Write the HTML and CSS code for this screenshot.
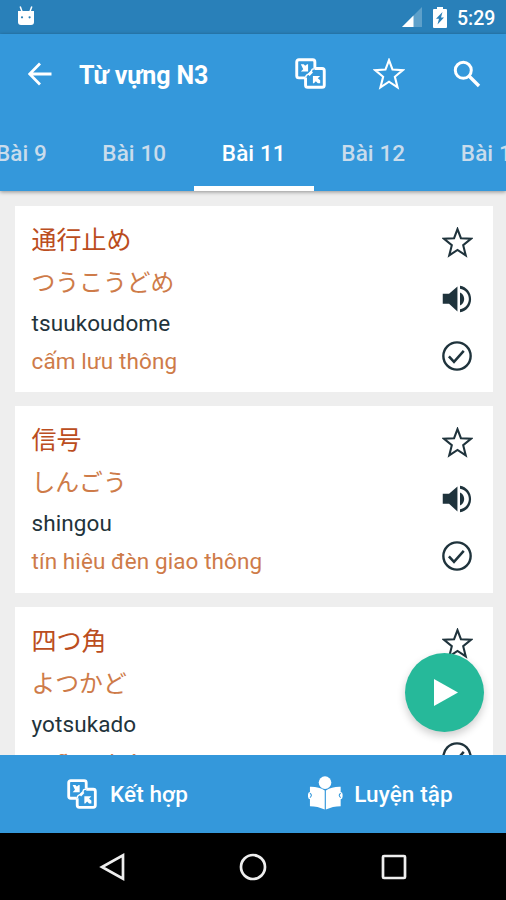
FILE: index.html
```html
<!DOCTYPE html>
<html lang="vi">
<head>
<meta charset="utf-8">
<title>Từ vựng N3</title>
<link rel="stylesheet" href="styles.css">
</head>
<body>
<svg class="defs" aria-hidden="true">
  <symbol id="star" viewBox="0 0 30 30"><path d="M15 2l3.300 8.800 9.700.6-7.500 6.200 2.500 9.900-8-5.300-8 5.300 2.500-9.900L2 11.400l9.700-.6z" fill="none" stroke="currentColor" stroke-width="2"/></symbol>
  <symbol id="sound" viewBox="0 0 24 24"><path d="M2.500 8.500v6.700h4.200l5.600 5.100V3.700L6.700 8.500zM14 7.700v8.700c1.700-.8 2.800-2.500 2.800-4.400S15.700 8.500 14 7.700zM14 3.200v2c3.500.7 5.900 3.400 5.900 6.800s-2.400 6.200-5.900 6.900v2c4.400-.7 7.400-4.400 7.400-8.900s-3-8.200-7.400-8.900z"/></symbol>
  <symbol id="check" viewBox="0 0 24 24"><circle cx="12" cy="12" r="9.100" fill="none" stroke="currentColor" stroke-width="1.600"/><path d="M6.600 12.200l3.400 3.700 6.500-7.300" fill="none" stroke="currentColor" stroke-width="1.700"/></symbol>
  <symbol id="match" viewBox="0 0 32 32"><g fill="none" stroke="currentColor" stroke-width="3"><path d="M10.500 20.500H4a2.200 2.200 0 0 1-2.200-2.200V4A2.200 2.200 0 0 1 4 1.800h14.300A2.200 2.200 0 0 1 20.500 4v6.500"/><path d="M20.500 10.900H28a2.200 2.200 0 0 1 2.200 2.200V28a2.200 2.200 0 0 1-2.200 2.200H13.100a2.200 2.200 0 0 1-2.200-2.200v-7.500"/><path d="M20.500 11c-5 0-2 2-4.500 4.500s-5 0-5 5" stroke-width="1.500"/><path d="M14 17.500l3.500-3.500" stroke-width="3"/></g><path d="M6 6.500h3l1.500 1.500L12.500 6.500h1v7.500H6l2.500-2.500zM18.500 18.500h7.500L23.500 21l2.500 2v3h-2.500L21.500 24l-2 2h-1z"/></symbol>
</svg>
<div class="screen">
  <header class="status">
    <svg class="robot" viewBox="0 0 18 20"><path d="M1 5h16v11q0 3-3 3H4q-3 0-3-3z"/><path d="M3.200.5l1.800 5M14.800.5l-1.800 5" stroke="currentColor" stroke-width="1.500"/><g fill="#2980b9"><circle cx="5" cy="11.300" r="1.100"/><circle cx="12.600" cy="11.300" r="1.100"/></g></svg>
    <span class="spring"></span>
    <svg class="signal" viewBox="0 0 20 20"><path opacity=".25" d="M0 20L20 0v20z"/><path d="M0 20L11.500 8.500V20z"/></svg>
    <svg class="battery" viewBox="0 0 14 21"><path d="M4 0h6v2h3q1 0 1 1v17q0 1-1 1H1q-1 0-1-1V3q0-1 1-1h3z"/><path fill="#2980b9" d="M9.500 5L3 11.800h3L4.500 17.500l6.500-7H8z"/></svg>
    <span class="clock">5:29</span>
  </header>
  <div class="appbar">
    <div class="toolbar">
      <svg class="back" viewBox="0 0 24 24"><path d="M12 1.500L1.600 12 12 22.500M2 12h21.500" fill="none" stroke="currentColor" stroke-width="2.800"/></svg>
      <h1>Từ vựng N3</h1>
      <svg class="tool-match"><use href="#match"/></svg>
      <svg class="tool-star"><use href="#star"/></svg>
      <svg class="search" viewBox="0 0 28 28"><circle cx="10.300" cy="10.300" r="8" fill="none" stroke="currentColor" stroke-width="3"/><path d="M16 16l10 10" stroke="currentColor" stroke-width="3.300"/></svg>
    </div>
    <nav class="tabs">
      <span class="tab short">Bài 9</span><span class="tab">Bài 10</span><span class="tab active">Bài 11</span><span class="tab">Bài 12</span><span class="tab">Bài 13</span>
    </nav>
  </div>
  <main class="list">
    <article class="card">
      <div class="words"><p class="kanji" lang="ja">通行止め</p><p class="kana" lang="ja">つうこうどめ</p><p class="romaji">tsuukoudome</p><p class="meaning">cấm lưu thông</p></div>
      <div class="actions"><svg class="fav"><use href="#star"/></svg><svg><use href="#sound"/></svg><svg><use href="#check"/></svg></div>
    </article>
    <article class="card">
      <div class="words"><p class="kanji" lang="ja">信号</p><p class="kana" lang="ja">しんごう</p><p class="romaji">shingou</p><p class="meaning">tín hiệu đèn giao thông</p></div>
      <div class="actions"><svg class="fav"><use href="#star"/></svg><svg><use href="#sound"/></svg><svg><use href="#check"/></svg></div>
    </article>
    <article class="card">
      <div class="words"><p class="kanji" lang="ja">四つ角</p><p class="kana" lang="ja">よつかど</p><p class="romaji">yotsukado</p><p class="meaning">ngã tư đường</p></div>
      <div class="actions"><svg class="fav"><use href="#star"/></svg><svg><use href="#sound"/></svg><svg><use href="#check"/></svg></div>
    </article>
    <div class="fab"><svg viewBox="0 0 24 28"><path d="M0 0l24 13.500L0 27z"/></svg></div>
  </main>
  <footer class="bottom">
    <div class="choice"><svg class="match-icon"><use href="#match"/></svg><span>Kết hợp</span></div>
    <div class="choice practice"><svg class="reader" viewBox="0 0 36 34"><circle cx="17.500" cy="6.300" r="6.500"/><path d="M2 10.500q9-.3 15.200 3.800V34Q10 30.500 2 30.500v-7Q0 23 0 20.500v-2q0-2 2-2.500zM33.600 10.500q-9-.3-15.200 3.800V34q7-3.500 15.200-3.500v-7q2-.5 2-3v-2q0-2-2-2.500z"/><path d="M2 17.200q3 2 0 4.500M33.600 17.200q-3 2 0 4.500" fill="none" stroke="#3498db" stroke-width="1.100"/></svg><span>Luyện tập</span></div>
  </footer>
  <nav class="system">
    <svg viewBox="0 0 28 28"><path d="M24 2.400v23.200L3 14z"/></svg>
    <svg viewBox="0 0 28 28"><circle cx="14" cy="14" r="12"/></svg>
    <svg viewBox="0 0 28 28"><rect x="3" y="3" width="22" height="22" rx="1"/></svg>
  </nav>
</div>
</body>
</html>
```
FILE: styles.css
```css
* { box-sizing: border-box; }
body { margin: 0; font-family: Roboto, "Noto Sans CJK JP", sans-serif; }
svg { display: block; fill: currentColor; flex: none; }
.defs { position: absolute; width: 0; height: 0; }
.screen { width: 506px; height: 900px; overflow: hidden; display: flex; flex-direction: column; background: #eee; }
.status { height: 34px; flex: none; background: #2980b9; color: #fff; display: flex; align-items: center; padding: 0 11px 0 17px; }
.robot { width: 18px; height: 20px; margin-top: -3px; }
.spring { flex: 1; }
.signal { width: 20px; height: 20px; margin-right: 11px; }
.battery { width: 14px; height: 21px; margin-right: 10px; }
.clock { font-size: 19.5px; font-weight: 500; line-height: 34px; width: 38px; white-space: nowrap; margin-top: 3px; }
.appbar { height: 157px; flex: none; background: #3498db; color: #fff; box-shadow: 0 1px 4px rgba(0,0,0,.4); z-index: 1; }
.toolbar { height: 79px; display: flex; align-items: center; padding: 0 25px 0 28px; }
.back { width: 24px; height: 24px; margin-right: 27px; }
h1 { margin: 0; flex: 1; font-size: 25px; font-weight: 700; letter-spacing: -.1px; line-height: 32px; padding-top: 4px; }
.tool-match { width: 31px; height: 31px; margin-right: 47px; }
.tool-star { width: 32px; height: 32px; margin: 1px 48px 0 0; }
.search { width: 28px; height: 28px; }
.tabs { height: 78px; display: flex; margin-left: -31.500px; overflow: hidden; }
.tab { width: 119.500px; flex: none; text-align: center; font-size: 22.500px; font-weight: 500; line-height: 80px; letter-spacing: .1px; color: #c9dcec; height: 78px; }
.tab.short { width: 106px; }
.tab.active { color: #fff; border-bottom: 5px solid #fff; }
.list { position: relative; flex: 1; min-height: 0; overflow: hidden; padding: 15px 13.500px 0 14.500px; display: flex; flex-direction: column; gap: 14px; }
.card { height: 186.400px; flex: none; background: #fff; display: flex; justify-content: space-between; padding: 15px 18px 0 17px; }
.words p { margin: 0; white-space: nowrap; }
.kanji { font-size: 25px; line-height: 40px; color: #bb4d20; }
.kana { font-size: 23.800px; line-height: 44px; color: #ce7b49; }
.romaji { font-size: 22.500px; line-height: 36px; color: #22333b; letter-spacing: .1px; }
.meaning { font-size: 22.500px; line-height: 41px; color: #ce7b49; letter-spacing: .1px; }
.actions { color: #1f333c; display: flex; flex-direction: column; align-items: center; gap: 21px; padding-top: 3px; }
.actions svg { width: 36px; height: 36px; }
.actions .fav { width: 31px; height: 31px; margin: 3px 0 2px 1px; }
.fab { position: absolute; left: 405px; top: 462px; width: 79px; height: 79px; border-radius: 50%; background: #26b99a; color: #fff; display: flex; align-items: center; justify-content: center; box-shadow: 0 4px 8px rgba(0,0,0,.2); }
.fab svg { width: 24px; height: 28px; margin-left: 2px; }
.bottom { height: 78px; flex: none; background: #3498db; color: #fff; display: grid; grid-template-columns: 1fr 1fr; font-size: 22.500px; font-weight: 500; letter-spacing: .1px; }
.choice { display: flex; align-items: center; justify-content: center; gap: 13px; padding-left: 2px; }
.choice .match-icon { width: 30px; height: 30px; }
.choice .reader { width: 35px; height: 34px; margin-top: -2px; }
.practice { gap: 11px; }
.system { height: 67px; flex: none; background: #000; display: flex; justify-content: center; align-items: center; gap: 112.500px; }
.system svg { width: 28px; height: 28px; fill: none; stroke: #eee; stroke-width: 2.700; }
```
